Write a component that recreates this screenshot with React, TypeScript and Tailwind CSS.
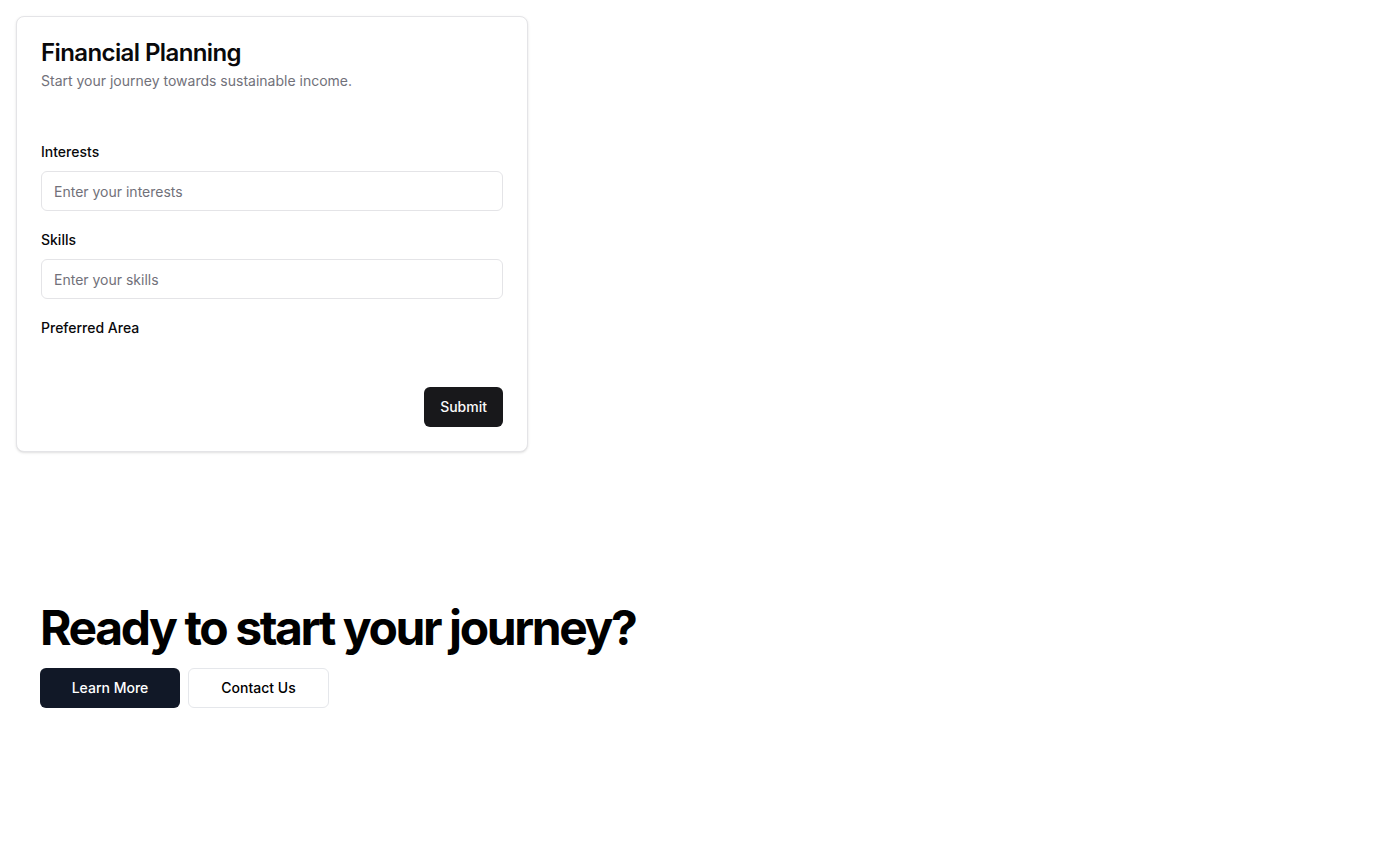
import React from "react";

function Field({ label, placeholder }: { label: string; placeholder: string }) {
  return (
    <div className="flex flex-col gap-[9px]">
      <label className="text-sm font-medium leading-5 text-[#09090b]">{label}</label>
      <input
        className="h-10 w-full rounded-md border border-[#e4e4e7] bg-white px-3 text-sm text-[#09090b] placeholder:text-[#71717a] outline-none"
        placeholder={placeholder}
      />
    </div>
  );
}

export default function App() {
  return (
    <div className="min-h-screen bg-white p-4 font-['Inter',sans-serif]">
      <div className="w-[512px] rounded-lg border border-[#e4e4e7] bg-white shadow-sm">
        <div className="flex flex-col gap-1.5 p-6">
          <h2 className="text-2xl font-semibold leading-none tracking-tight text-[#09090b]">
            Financial Planning
          </h2>
          <p className="text-sm text-[#71717a]">Start your journey towards sustainable income.</p>
        </div>
        <div className="px-6 pb-6 pt-[27px]">
          <form className="flex flex-col gap-[19px]" onSubmit={(e) => e.preventDefault()}>
            <Field label="Interests" placeholder="Enter your interests" />
            <Field label="Skills" placeholder="Enter your skills" />
            <div className="flex flex-col gap-2">
              <label className="text-sm font-medium leading-5 text-[#09090b]">Preferred Area</label>
            </div>
            <div className="mt-[30px] flex justify-end">
              <button
                type="submit"
                className="h-10 rounded-md bg-[#18181b] px-4 text-sm font-medium text-[#fafafa]"
              >
                Submit
              </button>
            </div>
          </form>
        </div>
      </div>

      <section className="mt-[152px] px-6">
        <h1 className="text-5xl font-bold leading-none tracking-tighter text-black">
          Ready to start your journey?
        </h1>
        <div className="mt-4 flex gap-2">
          <button className="h-10 w-[140px] rounded-md bg-[#111827] text-sm font-medium text-white">
            Learn More
          </button>
          <button className="h-10 w-[141px] rounded-md border border-[#e5e7eb] bg-white text-sm font-medium text-black">
            Contact Us
          </button>
        </div>
      </section>
    </div>
  );
}
